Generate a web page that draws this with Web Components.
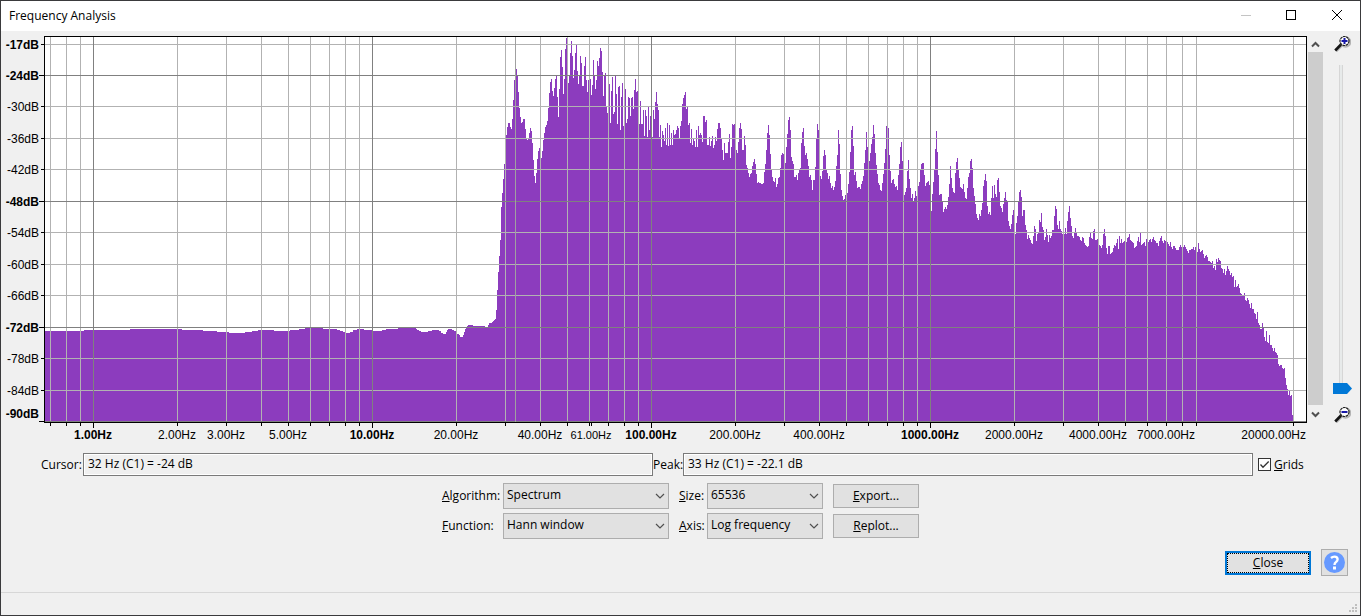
<!DOCTYPE html>
<html lang="en">
<head>
<meta charset="utf-8">
<title>Frequency Analysis</title>
<style>
    body {
        margin: 0;
        background: #f0f0f0;
        color: #000;
        font: 12px/16px "Open Sans", "Noto Sans", sans-serif;
    }
</style>
</head>
<body>
<app-window window-title="Frequency Analysis">
    <spectrum-chart></spectrum-chart>
    <readout-row></readout-row>
    <option-grid></option-grid>
    <dialog-footer></dialog-footer>
</app-window>

<script>
// [first column, top] for the smooth low end, the top holds until the next entry
const LOW_END = [
    [0, 294], [39, 293], [85, 292], [137, 293], [158, 294], [172, 295], [184, 296], [200, 295],
    [207, 294], [213, 293], [229, 294], [245, 293], [254, 292], [260, 291], [278, 292], [292, 293],
    [295, 294], [298, 295], [301, 296], [305, 295], [308, 293], [312, 292], [319, 293], [327, 294],
    [337, 293], [341, 292], [353, 291], [371, 292], [372, 293], [374, 294], [376, 295], [383, 294],
    [387, 293], [394, 294], [396, 296], [398, 297], [401, 295], [402, 293], [403, 292], [407, 293],
    [409, 294], [411, 295], [412, 297], [414, 298], [415, 300], [418, 298], [419, 295], [420, 292],
    [421, 290], [422, 289], [423, 288], [428, 289], [440, 290], [443, 288], [444, 286], [447, 285],
    [448, 284], [449, 283], [450, 282], [451, 273], [452, 253], [453, 235], [454, 219], [455, 203]
];

// one top per column, from column 456 on
const PEAKS_START = 456;
const PEAKS = [
    170,156,142,127,113,98,90,86,86,90,92,82,63,43,38,32,39,55,71,80,86,85,82,82,92,101,103,102,96,91,
    94,106,123,139,146,136,122,114,111,111,121,114,103,96,90,88,84,71,56,45,42,54,59,51,42,39,60,80,52,20,
    13,30,57,42,12,1,26,46,38,16,4,19,41,33,16,8,34,47,39,19,26,49,49,29,20,43,55,43,43,42,
    58,48,23,39,52,43,24,29,21,11,14,35,59,39,36,70,76,60,47,86,54,40,77,75,39,57,87,50,49,93,
    60,46,89,70,52,86,82,60,61,79,61,60,72,53,42,55,54,60,87,64,87,87,73,99,73,79,100,70,93,79,
    90,100,73,82,65,55,67,73,100,88,110,94,98,104,91,108,86,109,88,108,96,108,93,98,97,93,89,91,101,89,
    84,67,61,58,55,72,70,88,86,106,92,108,102,104,110,93,110,89,98,
    96,98,105,79,79,85,83,108,108,100,109,104,99,111,108,100,104,92,86,86,91,102,113,123,106,116,116,116,105,97,
    121,110,87,88,87,100,113,116,105,91,86,92,113,113,99,108,128,131,136,140,137,136,129,125,122,127,137,146,145,146,
    146,147,147,146,135,127,113,96,88,98,117,133,140,144,145,141,150,147,141,140,131,118,116,117,123,126,110,97,83,80,
    93,120,124,127,140,140,138,143,136,133,131,106,95,91,109,118,116,122,129,140,138,143,153,143,143,130,101,87,93,116,
    139,142,134,119,113,118,133,136,142,139,146,151,149,153,150,144,129,118,93,107,137,153,159,163,162,158,158,156,147,135,
    115,93,89,109,138,135,144,151,150,150,152,147,144,139,126,113,95,110,118,124,116,107,100,88,97,116,128,137,146,148,
    153,154,146,137,126,112,89,90,91,118,134,146,143,142,147,150,149,153,138,127,110,105,124,143,158,155,151,134,123,142,
    151,161,157,164,161,154,159,155,149,145,133,127,126,126,138,149,146,145,144,148,160,174,157,145,133,112,94,115,138,158,
    157,157,165,175,172,170,172,168,160,147,129,141,151,155,156,136,125,121,133,141,150,151,152,147,155,161,162,151,140,136,
    124,122,131,151,159,167,177,181,183,177,179,173,166,149,143,137,144,169,177,175,178,161,149,161,148,157,160,143,141,155,
    169,171,175,167,161,155,163,165,184,189,192,187,178,173,186,197,186,179,165,155,153,160,179,173,173,188,193,202,198,201,
    203,206,207,199,189,192,204,197,195,183,185,176,190,193,203,200,192,198,205,198,201,199,193,193,179,169,172,188,192,184,
    192,194,197,196,197,191,197,184,175,169,181,189,199,201,196,191,195,199,199,200,203,204,200,201,206,208,209,210,209,200,
    196,201,202,194,192,203,203,202,205,208,209,211,208,197,192,199,211,217,209,209,217,216,215,211,208,209,206,202,212,199,
    206,202,206,205,204,204,205,201,200,197,203,204,205,206,211,210,209,204,200,205,196,208,207,206,205,209,202,206,205,203,
    202,205,202,200,203,204,206,206,209,204,201,199,204,206,203,204,205,205,207,209,205,210,212,209,209,211,213,213,213,210,
    208,210,210,210,208,210,212,214,216,213,213,212,212,210,213,210,213,215,206,212,215,214,213,217,221,219,218,220,224,224,
    225,226,224,231,229,233,222,225,221,223,224,231,232,236,232,238,234,229,232,234,238,236,240,239,250,243,250,249,247,251,
    256,257,258,258,256,263,264,261,263,267,271,266,272,272,276,277,282,275,286,288,292,292,286,291,300,304,294,305,306,298,
    308,308,311,314,311,315,316,318,327,329,328,328,331,332,331,341,348,352,358,354,359,358,378
];

const PLOT_W = 1261;
const PLOT_H = 385;
const DECADE = 279;
const ONE_HZ = 48;
const CURSOR_X = 470;

const freqX = f => Math.round(ONE_HZ + DECADE * Math.log10(f));

const FREQS = [0.7, 0.8, 0.9];
for (const base of [1, 10, 100, 1000]) {
    for (let n = 1; n < 10; n++) FREQS.push(base * n);
}
FREQS.push(20000);

const MAJOR_FREQS = [1, 10, 100, 1000];
const FREQ_LABELS = [1, 2, 3, 5, 10, 20, 40, 61, 100, 200, 400, 1000, 2000, 4000, 7000, 20000];

// [label, y, dark grid line, bold label]
const LEVELS = [
    ['-17dB', 7, false, true], ['-24dB', 38, true, true], ['-30dB', 69, false, false],
    ['-36dB', 101, false, false], ['-42dB', 132, false, false], ['-48dB', 164, true, true],
    ['-54dB', 195, false, false], ['-60dB', 227, false, false], ['-66dB', 258, false, false],
    ['-72dB', 290, true, true], ['-78dB', 321, false, false], ['-84dB', 353, false, false],
    ['-90dB', 384, true, true]
];

function spectrumPath() {
    let d = `M0 ${PLOT_H}`;
    LOW_END.forEach(([, top], i) => {
        const end = i + 1 < LOW_END.length ? LOW_END[i + 1][0] : PEAKS_START;
        d += `V${top}H${end}`;
    });
    PEAKS.forEach((top, i) => { d += `V${top}H${PEAKS_START + i + 1}`; });
    return d + `V${PLOT_H}Z`;
}

class AppWindow extends HTMLElement {
    constructor() {
        super();
        this.attachShadow({ mode: 'open' });
        this.shadowRoot.innerHTML = `
            <style>
                :host {
                    display: flex;
                    flex-direction: column;
                    box-sizing: border-box;
                    min-height: 100vh;
                    border: 1px solid #3a3a3c;
                    background: #f0f0f0;
                }
                header {
                    display: flex;
                    align-items: center;
                    height: 30px;
                    padding-left: 8px;
                    background: #fff;
                }
                h1 {
                    flex: 1;
                    margin: 0;
                    font: inherit;
                }
                button {
                    display: flex;
                    align-items: center;
                    justify-content: center;
                    width: 46px;
                    height: 30px;
                    padding: 0;
                    border: 0;
                    background: none;
                }
                svg {
                    fill: none;
                    stroke: #000;
                }
                button:disabled svg {
                    stroke: #c4c4c4;
                }
                main {
                    flex: 1;
                    display: flex;
                    flex-direction: column;
                }
                .status {
                    display: flex;
                    align-items: flex-end;
                    justify-content: flex-end;
                    height: 22px;
                    border-top: 1px solid #d7d7d7;
                }
                .status svg {
                    fill: #bfbfbf;
                    stroke: none;
                }
            </style>
            <header>
                <h1></h1>
                <button type="button" aria-label="Minimize" disabled>
                    <svg width="12" height="12"><path d="M2 5.5H12"/></svg>
                </button>
                <button type="button" aria-label="Maximize">
                    <svg width="12" height="12"><rect x="1.5" y=".5" width="9" height="9"/></svg>
                </button>
                <button type="button" aria-label="Close">
                    <svg width="12" height="12"><path d="M1 0L11 10M11 0L1 10"/></svg>
                </button>
            </header>
            <main><slot></slot></main>
            <div class="status">
                <svg width="11" height="11">
                    <path d="M6 0h2v2h-2zM3 3h2v2h-2zM6 3h2v2h-2zM0 6h2v2h-2zM3 6h2v2h-2zM6 6h2v2h-2z"/>
                </svg>
            </div>
        `;
        this.shadowRoot.querySelector('h1').textContent = this.getAttribute('window-title');
    }
}

customElements.define('app-window', AppWindow);

class SpectrumChart extends HTMLElement {
    constructor() {
        super();
        this.attachShadow({ mode: 'open' });
        this.shadowRoot.innerHTML = `
            <style>
                :host {
                    flex: 1;
                    display: grid;
                    grid-template-columns: 43px minmax(0, 1fr) 53px;
                    grid-template-rows: minmax(200px, 1fr) 30px;
                    padding-top: 5px;
                }
                svg {
                    display: block;
                    shape-rendering: crispEdges;
                }
                .levels, .freqs {
                    position: relative;
                    font: 12px/14px "Liberation Sans", Arial, sans-serif;
                }
                .levels {
                    margin: 1px 0;
                }
                .levels svg {
                    width: 5px;
                    height: 100%;
                    margin-left: auto;
                }
                .freqs {
                    grid-column: 2;
                    margin: 0 1px;
                }
                .freqs svg {
                    width: 100%;
                    height: 5px;
                }
                .levels span, .freqs span {
                    position: absolute;
                    white-space: nowrap;
                }
                .levels span {
                    right: 5px;
                    transform: translateY(-50%);
                }
                .levels span:last-child {
                    bottom: 1px;
                    transform: none;
                }
                .freqs span {
                    top: 5px;
                    transform: translateX(-50%);
                }
                .freqs span:last-child {
                    right: 0;
                    transform: none;
                }
                .freqs .small {
                    font-size: 11px;
                }
                .bold {
                    font-weight: bold;
                }
                .plot {
                    min-height: 0;
                    border: 1px solid #000;
                    background: #fff;
                }
                .plot svg {
                    width: 100%;
                    height: 100%;
                }
                .side {
                    display: flex;
                    gap: 10px;
                    padding-left: 1px;
                }
            </style>
            <div class="levels"></div>
            <div class="plot"></div>
            <div class="side">
                <pan-bar></pan-bar>
                <zoom-slider></zoom-slider>
            </div>
            <div class="freqs"></div>
        `;
        this.drawPlot();
        this.drawLevels();
        this.drawFreqs();
    }

    drawPlot() {
        const vLine = x => `M${x} 0h1v${PLOT_H}h-1z`;
        const hLine = y => `M0 ${y}h${PLOT_W}v1h-${PLOT_W}z`;
        const major = f => MAJOR_FREQS.includes(f);
        const light = LEVELS.filter(l => !l[2]).map(l => hLine(l[1])).join('') +
            FREQS.filter(f => !major(f)).map(f => vLine(freqX(f))).join('');
        const dark = LEVELS.filter(l => l[2]).map(l => hLine(l[1])).join('') +
            MAJOR_FREQS.map(f => vLine(freqX(f))).join('');

        this.shadowRoot.querySelector('.plot').innerHTML = `
            <svg viewBox="0 0 ${PLOT_W} ${PLOT_H}" preserveAspectRatio="none">
                <path fill="#8c3cbe" d="${spectrumPath()}"/>
                <path fill="#b2b2b2" d="${light}"/>
                <path fill="#808080" d="${dark}"/>
                <path fill="#a0a0a0" d="${vLine(CURSOR_X)}"/>
            </svg>`;
    }

    drawLevels() {
        const ticks = LEVELS.map(([, y, major]) => major ? `M0 ${y}h5v1h-5z` : `M2 ${y}h3v1h-3z`).join('');
        const labels = LEVELS.map(([text, y, , bold], i) => {
            const top = i < LEVELS.length - 1 ? `top:${(y + 1) / PLOT_H * 100}%` : '';
            return `<span class="${bold ? 'bold' : ''}" style="${top}">${text}</span>`;
        }).join('');

        this.shadowRoot.querySelector('.levels').innerHTML =
            `<svg viewBox="0 0 5 ${PLOT_H}" preserveAspectRatio="none"><path d="${ticks}"/></svg>${labels}`;
    }

    drawFreqs() {
        const ticks = [...FREQS, 61].map(f => {
            const h = MAJOR_FREQS.includes(f) ? 5 : 3;
            return `M${freqX(f)} 0h1v${h}h-1z`;
        }).join('');
        const labels = FREQ_LABELS.map((f, i) => {
            const left = i < FREQ_LABELS.length - 1 ? `left:${freqX(f) / PLOT_W * 100}%` : '';
            const cls = MAJOR_FREQS.includes(f) ? 'bold' : f === 61 ? 'small' : '';
            return `<span class="${cls}" style="${left}">${f.toFixed(2)}Hz</span>`;
        }).join('');

        this.shadowRoot.querySelector('.freqs').innerHTML =
            `<svg viewBox="0 0 ${PLOT_W} 5" preserveAspectRatio="none"><path d="${ticks}"/></svg>${labels}`;
    }
}

class PanBar extends HTMLElement {
    constructor() {
        super();
        this.attachShadow({ mode: 'open' });
        this.shadowRoot.innerHTML = `
            <style>
                :host {
                    display: flex;
                    flex-direction: column;
                    width: 15px;
                }
                button {
                    height: 16px;
                    padding: 0;
                    border: 0;
                    background: none;
                }
                button:last-child {
                    height: 18px;
                }
                svg {
                    display: block;
                    margin: auto;
                    fill: none;
                    stroke: #505050;
                    stroke-width: 2;
                }
                .thumb {
                    flex: 1;
                    background: #cdcdcd;
                }
            </style>
            <button type="button" aria-label="Scroll up"><svg width="9" height="7"><path d="M1 5.5L4.5 2L8 5.5"/></svg></button>
            <div class="thumb"></div>
            <button type="button" aria-label="Scroll down"><svg width="9" height="7"><path d="M1 1.5L4.5 5L8 1.5"/></svg></button>
        `;
    }
}

class ZoomSlider extends HTMLElement {
    constructor() {
        super();
        this.attachShadow({ mode: 'open' });
        const lens = sign => `
            <svg width="17" height="16" viewBox="0 0 17 16">
                <path d="M7.5 9.5L2 15" stroke="#b4b4b4" stroke-width="3"/>
                <circle cx="11.5" cy="6" r="4.8" fill="none" stroke="#b4b4b4" stroke-width="2"/>
                <path d="M7 8.5L1.2 14.5" stroke="#141414" stroke-width="2.6"/>
                <circle cx="10.5" cy="5" r="4.5" fill="#fff" stroke="#202020" stroke-width="1.2" stroke-dasharray="2.6 .6"/>
                <path d="${sign}" stroke="#1818a8" stroke-width="2"/>
            </svg>`;
        this.shadowRoot.innerHTML = `
            <style>
                :host {
                    display: flex;
                    flex-direction: column;
                    align-items: center;
                    gap: 13px;
                    width: 19px;
                }
                svg {
                    display: block;
                }
                input {
                    appearance: none;
                    writing-mode: vertical-lr;
                    direction: rtl;
                    flex: 1;
                    width: 19px;
                    min-height: 0;
                    margin: 0;
                    background: linear-gradient(90deg, #d6d6d6 1px, #e7eaea 1px 3px, #d6d6d6 3px) 6px 0 / 4px 100% no-repeat;
                }
                input::-webkit-slider-thumb {
                    appearance: none;
                    width: 19px;
                    height: 11px;
                    background: #0078d7;
                    clip-path: polygon(0 0, 14px 0, 100% 50%, 14px 100%, 0 100%);
                }
            </style>
            ${lens('M7.5 5H13.5M10.5 2V8')}
            <input type="range" min="0" max="100" value="0" aria-label="Vertical zoom">
            ${lens('M7.5 5H13.5')}
        `;
    }
}

customElements.define('pan-bar', PanBar);
customElements.define('zoom-slider', ZoomSlider);
customElements.define('spectrum-chart', SpectrumChart);

class ReadoutRow extends HTMLElement {
    constructor() {
        super();
        this.attachShadow({ mode: 'open' });
        this.shadowRoot.innerHTML = `
            <style>
                :host {
                    display: grid;
                    grid-template-columns: 42px 1fr 30px 1fr 107px;
                    align-items: center;
                    padding-left: 40px;
                }
                label {
                    white-space: nowrap;
                }
                input[type=text] {
                    box-sizing: border-box;
                    width: 100%;
                    height: 23px;
                    padding: 0 4px 2px;
                    border: 1px solid #7a7a7a;
                    box-shadow: inset 0 0 0 1px #fff;
                    background: #f0f0f0;
                    color: inherit;
                    font: inherit;
                }
                .check {
                    display: flex;
                    align-items: center;
                    gap: 3px;
                    padding-left: 5px;
                }
                input[type=checkbox] {
                    appearance: none;
                    grid-area: 1 / 1;
                    box-sizing: border-box;
                    width: 13px;
                    height: 13px;
                    margin: 0;
                    border: 1px solid #333;
                    background: #fff;
                }
                .box {
                    display: grid;
                }
                svg {
                    grid-area: 1 / 1;
                    fill: none;
                    stroke: #333;
                    pointer-events: none;
                }
                input:not(:checked) + svg {
                    visibility: hidden;
                }
            </style>
            <label for="cursor">Cursor:</label>
            <input id="cursor" type="text" readonly value="32 Hz (C1) = -24 dB">
            <label for="peak">Peak:</label>
            <input id="peak" type="text" readonly value="33 Hz (C1) = -22.1 dB">
            <div class="check">
                <span class="box">
                    <input id="grids" type="checkbox" checked>
                    <svg width="13" height="13"><path d="M2.5 6.5L5 9.2L10.7 3.5" stroke-width="1.3"/></svg>
                </span>
                <label for="grids"><u>G</u>rids</label>
            </div>
        `;
    }
}

customElements.define('readout-row', ReadoutRow);

class ComboField extends HTMLElement {
    constructor() {
        super();
        this.attachShadow({ mode: 'open' });
        const label = this.getAttribute('label');
        this.shadowRoot.innerHTML = `
            <style>
                :host {
                    display: contents;
                }
                label {
                    white-space: nowrap;
                }
                .combo {
                    display: grid;
                    align-items: center;
                    margin-right: 10px;
                }
                select {
                    appearance: none;
                    grid-area: 1 / 1;
                    box-sizing: border-box;
                    width: 100%;
                    height: 26px;
                    padding: 0 24px 2px 3px;
                    border: 1px solid #adadad;
                    border-radius: 0;
                    background: #e1e1e1;
                    color: inherit;
                    font: inherit;
                }
                svg {
                    grid-area: 1 / 1;
                    justify-self: end;
                    margin-right: 4px;
                    fill: none;
                    stroke: #505050;
                    pointer-events: none;
                }
            </style>
            <label for="list"><u>${label[0]}</u>${label.slice(1)}</label>
            <div class="combo">
                <select id="list"><option>${this.getAttribute('value')}</option></select>
                <svg width="10" height="6"><path d="M1 1L5 5L9 1" stroke-width="1.2"/></svg>
            </div>
        `;
    }
}

class PushButton extends HTMLElement {
    constructor() {
        super();
        this.attachShadow({ mode: 'open' });
        this.shadowRoot.innerHTML = `
            <style>
                :host {
                    display: block;
                }
                button {
                    display: block;
                    box-sizing: border-box;
                    width: 86px;
                    height: 24px;
                    padding: 0;
                    border: 1px solid #adadad;
                    background: #e1e1e1;
                    color: inherit;
                    font: inherit;
                }
                :host([default]) button {
                    border: 2px solid #0078d7;
                    outline: 1px dotted #000;
                    outline-offset: -3px;
                }
                :host([icon]) button {
                    display: flex;
                    align-items: center;
                    justify-content: center;
                    width: 27px;
                    height: 27px;
                }
            </style>
            <button type="button"><slot></slot></button>
        `;
    }
}

customElements.define('combo-field', ComboField);
customElements.define('push-button', PushButton);

class OptionGrid extends HTMLElement {
    constructor() {
        super();
        this.attachShadow({ mode: 'open' });
        this.shadowRoot.innerHTML = `
            <style>
                :host {
                    display: grid;
                    grid-template-columns: 61px 176px 28px 126px 86px;
                    grid-auto-rows: 26px;
                    row-gap: 4px;
                    justify-content: center;
                    align-items: center;
                    padding: 7px 0 10px;
                }
            </style>
            <combo-field label="Algorithm:" value="Spectrum"></combo-field>
            <combo-field label="Size:" value="65536"></combo-field>
            <push-button><u>E</u>xport...</push-button>
            <combo-field label="Function:" value="Hann window"></combo-field>
            <combo-field label="Axis:" value="Log frequency"></combo-field>
            <push-button><u>R</u>eplot...</push-button>
        `;
    }
}

customElements.define('option-grid', OptionGrid);

class DialogFooter extends HTMLElement {
    constructor() {
        super();
        this.attachShadow({ mode: 'open' });
        this.shadowRoot.innerHTML = `
            <style>
                :host {
                    display: flex;
                    justify-content: flex-end;
                    align-items: center;
                    gap: 10px;
                    padding: 0 12px 16px;
                }
                svg {
                    display: block;
                }
            </style>
            <push-button default><u>C</u>lose</push-button>
            <push-button icon>
                <svg width="21" height="21" role="img" aria-label="Help">
                    <circle cx="10.5" cy="10.5" r="10.5" fill="#6699ff"/>
                    <path d="M7 6Q8.5 4.6 10.4 4.6Q13.6 4.6 13.6 7.3Q13.6 8.8 12 10Q10.5 11 10.5 13" fill="none" stroke="#fff" stroke-width="2.4"/>
                    <rect x="9" y="14.5" width="3" height="3" fill="#fff"/>
                </svg>
            </push-button>
        `;
    }
}

customElements.define('dialog-footer', DialogFooter);
</script>
</body>
</html>
